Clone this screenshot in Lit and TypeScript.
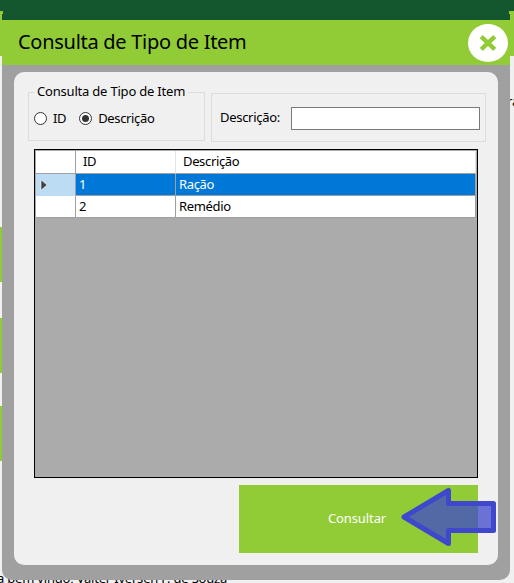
import { LitElement, html, css } from "lit";
import { customElement, state } from "lit/decorators.js";
import { classMap } from "lit/directives/class-map.js";

@customElement("app-root")
export class AppRoot extends LitElement {
  @state() private mode = "desc";
  @state() private selected = 1;

  private rows = [
    { id: 1, name: "Ração" },
    { id: 2, name: "Remédio" },
  ];

  static styles = css`
    :host { display: block; position: relative; width: 514px; height: 583px; overflow: hidden; background: #f0f0f0; color: #000; font: 13px/18px "Noto Sans", "Open Sans", sans-serif; }
    * { box-sizing: border-box; }
    .t { display: inline-block; white-space: nowrap; }
    .back { position: absolute; inset: 0; background: #f0f0f0; }
    .band { height: 11px; background: #14572f; }
    .strip { height: 45px; background: #91cc36; }
    .side { width: 2px; display: flex; flex-direction: column; padding-top: 171px; }
    .side i { height: 55px; background: #91cc36; margin-bottom: 36px; }
    .side i + i { margin-bottom: 33px; }
    .hint { position: absolute; left: 507px; top: 92px; }
    .welcome { position: absolute; left: -3px; top: 569px; letter-spacing: -0.2px; }
    .window { position: absolute; left: 2px; top: 11px; width: 508px; height: 569px; background: #a0a0a0; border-radius: 0 0 10px 10px; overflow: hidden; display: flex; flex-direction: column; }
    .cap { height: 9px; background: #14572f; }
    .corner { position: absolute; top: 11px; width: 3px; height: 3px; background: #91cc36; }
    .left { left: 0; }
    .right { right: 0; width: 5px; }
    .title { height: 45px; background: #91cc36; display: flex; align-items: center; justify-content: space-between; padding: 0 2px 0 16px; font-size: 20px; line-height: 28px; }
    .title .t { letter-spacing: -0.28px; margin-top: -1px; }
    .close { border: 0; padding: 0; background: none; width: 40px; height: 38px; margin-top: 1px; }
    svg { display: block; }
    .panel { margin: 7px 12px 0; height: 493px; border-radius: 10px; background: #f0f0f0; padding: 20px 12px 0 14px; }
    .filters { display: flex; gap: 6px; height: 50px; }
    fieldset { position: relative; margin: 0; padding: 0; border: 1px solid #dcdcdc; height: 49px; width: 177px; display: flex; align-items: center; padding: 3px 0 0 5px; }
    .legend { position: absolute; left: 5px; top: -11px; padding: 0 3px; background: #f0f0f0; letter-spacing: -0.2px; }
    label { display: flex; align-items: center; gap: 6px; letter-spacing: -0.35px; }
    label + label { margin-left: 13px; }
    .radio { width: 13px; height: 13px; border: 1px solid #333; border-radius: 50%; background: #fff; display: grid; place-items: center; }
    .on::after { content: ""; width: 7px; height: 7px; border-radius: 50%; background: #333; }
    .search { margin-top: 1px; width: 275px; height: 49px; border: 1px solid #dcdcdc; display: flex; align-items: center; justify-content: space-between; padding: 0 5px 0 8px; letter-spacing: -0.3px; }
    .search .t { margin-top: -1px; }
    .field { width: 189px; height: 23px; border: 1px solid #7a7a7a; background: #fff; padding: 0 3px; font: inherit; outline: 0; margin-top: 1px; }
    .grid { margin: 7px 0 0 6px; width: 444px; height: 329px; border: 1px solid #000; background: #ababab; padding: 1px 1px 0; }
    .row { display: grid; grid-template-columns: 40px 100px 300px; height: 22px; letter-spacing: -0.35px; }
    .cell { border-right: 1px solid #a0a0a0; border-bottom: 1px solid #a0a0a0; background: #fff; padding: 0 3px; line-height: 20px; }
    .head { height: 23px; }
    .head .cell { padding-left: 7px; line-height: 20px; }
    .head .cell:nth-child(n + 2) { border-right-color: #e5e5e5; }
    .sel .cell { background: #0078d7; color: #fff; }
    .sel .cell:first-child { background: #bcdcf4; border-bottom-color: #bcdcf4; padding: 5px 0 0 4px; }
    .action { display: block; margin: 7px 0 0 211px; width: 239px; height: 68px; border: 0; padding: 0 3px 2px 0; background: #91cc36; color: #fff; font: inherit; letter-spacing: -0.1px; }
    .arrow { position: absolute; left: 398px; top: 484px; }
  `;

  render() {
    return html`
      <div class="back">
        <div class="band"></div>
        <div class="strip"></div>
        <div class="side"><i></i><i></i><i></i></div>
        <span class="t hint">ra</span>
        <span class="t welcome">a bem vindo, Valter Iversen F. de Souza</span>
      </div>
      <main class="window">
        <div class="cap"></div>
        <header class="title">
          <span class="t">Consulta de Tipo de Item</span>
          <button class="close" aria-label="Fechar">
            <svg width="40" height="38" viewBox="0 0 40 38">
              <ellipse cx="20" cy="19" rx="20" ry="19" fill="#fff" />
              <path d="M13.2 12.6L26.8 25.4M26.8 12.6L13.2 25.4" stroke="#91cc36" stroke-width="4.4" />
            </svg>
          </button>
        </header>
        <section class="panel">
          <div class="filters">
            <fieldset>
              <span class="t legend">Consulta de Tipo de Item</span>
              ${[["id", "ID"], ["desc", "Descrição"]].map(
                ([key, text]) => html`<label @click=${() => (this.mode = key)}>
                  <span class=${classMap({ radio: true, on: this.mode === key })}></span><span class="t">${text}</span>
                </label>`
              )}
            </fieldset>
            <div class="search"><span class="t">Descrição:</span><input class="field" /></div>
          </div>
          <div class="grid">
            <div class="row head"><div class="cell"></div><div class="cell">ID</div><div class="cell">Descrição</div></div>
            ${this.rows.map(
              (r) => html`<div class=${classMap({ row: true, sel: r.id === this.selected })} @click=${() => (this.selected = r.id)}>
                <div class="cell">
                  ${r.id === this.selected
                    ? html`<svg width="8" height="12" viewBox="0 0 8 12"><path d="M1 .8v10.4L7 6z" fill="#404040" stroke="#fff" stroke-width=".6" /></svg>`
                    : ""}
                </div>
                <div class="cell">${r.id}</div>
                <div class="cell">${r.name}</div>
              </div>`
            )}
          </div>
          <button class="action">Consultar</button>
        </section>
      </main>
      <i class="corner left"></i><i class="corner right"></i>
      <svg class="arrow" width="104" height="66" viewBox="398 484 104 66">
        <path d="M404 517L448.5 490.5V503.5H493.5V530.5H448.5V543.5Z" fill="#3f48cc" fill-opacity=".75" />
        <path d="M404 517L448.5 490.5V503.5H493.5V530.5H448.5V543.5Z" fill="none" stroke="#3f48cc" stroke-width="5" stroke-linejoin="round" />
      </svg>
    `;
  }
}
